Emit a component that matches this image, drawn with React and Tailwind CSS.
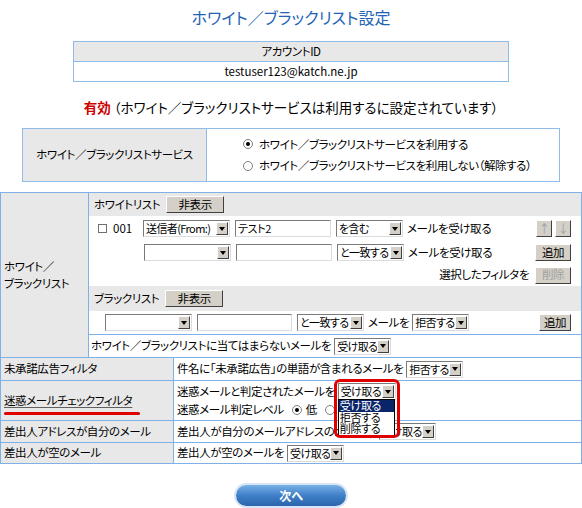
import React from 'react'

// Windows-classic style controls
function Sel({ value = '', className = '' }) {
  return (
    <span className={`relative inline-flex items-center h-[17px] bg-white border border-t-[#7a7a7a] border-l-[#7a7a7a] border-b-[#dcdcdc] border-r-[#dcdcdc] ${className}`}>
      <span className="pl-[2px] pr-[1px] text-[11px] tracking-[-0.6px] leading-[15px] whitespace-nowrap overflow-hidden">{value}</span>
      <span className="ml-auto mr-[1px] w-[12px] h-[13px] shrink-0 bg-[#d4d0c8] border border-t-white border-l-white border-b-[#404040] border-r-[#404040] flex items-center justify-center">
        <span className="w-0 h-0 border-l-[3px] border-r-[3px] border-t-[4px] border-l-transparent border-r-transparent border-t-black" />
      </span>
    </span>
  )
}

function Inp({ value = '', className = '' }) {
  return (
    <span className={`inline-flex items-center h-[17px] bg-white border border-t-[#7a7a7a] border-l-[#7a7a7a] border-b-[#dcdcdc] border-r-[#dcdcdc] px-[2px] text-[11px] tracking-[-0.4px] leading-[15px] ${className}`}>{value}</span>
  )
}

function Btn({ children, disabled, className = '' }) {
  return (
    <span className={`inline-flex items-center justify-center h-[17px] bg-[#d4d0c8] border border-t-white border-l-white border-b-[#404040] border-r-[#404040] text-[11.5px] leading-none ${disabled ? 'text-[#a0a0a0]' : 'text-black'} ${className}`}>{children}</span>
  )
}

function Radio({ on }) {
  return (
    <span className="inline-flex items-center justify-center w-[10px] h-[10px] rounded-full bg-white border border-[#808080] shrink-0">
      {on && <span className="w-[4px] h-[4px] rounded-full bg-black" />}
    </span>
  )
}

function App() {
  const bd = 'border border-[#7fb1e6]'
  return (
    <div className="w-[582px] h-[508px] bg-white text-black text-[11.5px] tracking-[-0.4px] font-['Noto_Sans_CJK_JP','Noto_Sans_CJK_SC',sans-serif] [font-feature-settings:'palt'] overflow-hidden">
      <div className="h-[34px] flex items-center justify-center text-[16px] tracking-normal text-[#2363b5]">ホワイト／ブラックリスト設定</div>

      <div className="mt-[7px] mx-auto w-[436px] border border-[#8fbbe8]">
        <div className="h-[20px] bg-[#e8e8e8] flex items-center justify-center border-b border-[#8fbbe8]">アカウントID</div>
        <div className="h-[19px] flex items-center justify-center tracking-normal">testuser123@katch.ne.jp</div>
      </div>

      <div className="mt-[16px] h-[18px] flex items-center justify-center text-[13.5px] tracking-normal">
        <span className="text-[#cc0000] font-bold">有効</span>
        <span className="ml-[3px]">（ホワイト／ブラックリストサービスは利用するに設定されています）</span>
      </div>

      <div className="mt-[12px] mx-auto w-[538px] h-[54px] flex border border-[#8fbbe8]">
        <div className="w-[184px] bg-[#e8e8e8] border-r border-[#8fbbe8] flex items-center justify-center">ホワイト／ブラックリストサービス</div>
        <div className="flex-1 flex flex-col justify-center gap-[4px] pl-[36px]">
          <div className="flex items-center gap-[6px]"><Radio on />ホワイト／ブラックリストサービスを利用する</div>
          <div className="flex items-center gap-[6px]"><Radio />ホワイト／ブラックリストサービスを利用しない（解除する）</div>
        </div>
      </div>

      <table className="mt-[10px] w-[582px] border-collapse">
        <colgroup>
          <col className="w-[88px]" />
          <col className="w-[85px]" />
          <col />
        </colgroup>
        <tbody>
          <tr>
            <td className={`${bd} bg-[#e8e8e8] align-middle pl-[3px]`}>ホワイト／<br />ブラックリスト</td>
            <td colSpan={2} className={`${bd} p-0`}>
              <div className="h-[23px] bg-[#e8e8e8] flex items-center pl-[5px] gap-[6px]">
                ホワイトリスト<Btn className="w-[58px]">非表示</Btn>
              </div>
              <div className="h-[25px] flex items-center pl-[9px] pr-[10px]">
                <span className="w-[9px] h-[9px] border border-[#707070] bg-white" />
                <span className="ml-[6px] w-[30px] tracking-normal">001</span>
                <Sel value="送信者(From:)" className="w-[87px]" />
                <Inp value="テスト2" className="ml-[5px] w-[96px]" />
                <Sel value="を含む" className="ml-[5px] w-[67px]" />
                <span className="ml-[4px]">メールを受け取る</span>
                <Btn disabled className="ml-auto w-[16px]">↑</Btn>
                <Btn disabled className="ml-[3px] w-[16px]">↓</Btn>
              </div>
              <div className="h-[23px] flex items-center pl-[55px] pr-[10px]">
                <Sel className="w-[87px]" />
                <Inp className="ml-[5px] w-[96px]" />
                <Sel value="と一致する" className="ml-[5px] w-[67px]" />
                <span className="ml-[4px]">メールを受け取る</span>
                <Btn className="ml-auto w-[36px]">追加</Btn>
              </div>
              <div className="h-[22px] flex items-center justify-end pr-[10px] gap-[6px]">
                選択したフィルタを<Btn disabled className="w-[36px]">削除</Btn>
              </div>
              <div className="h-[25px] bg-[#e8e8e8] flex items-center pl-[5px] gap-[6px]">
                ブラックリスト<Btn className="w-[58px]">非表示</Btn>
              </div>
              <div className="h-[23px] flex items-center pl-[16px] pr-[10px]">
                <Sel className="w-[87px]" />
                <Inp className="ml-[5px] w-[95px]" />
                <Sel value="と一致する" className="ml-[5px] w-[67px]" />
                <span className="ml-[4px]">メールを</span>
                <Sel value="拒否する" className="ml-[3px] w-[57px]" />
                <Btn className="ml-auto w-[32px]">追加</Btn>
              </div>
              <div className="h-[23px] flex items-center pl-[2px] border-t border-[#7fb1e6]">
                ホワイト／ブラックリストに当てはまらないメールを
                <Sel value="受け取る" className="ml-[3px] w-[57px]" />
              </div>
            </td>
          </tr>
          <tr className="h-[23px]">
            <td colSpan={2} className={`${bd} bg-[#e8e8e8] pl-[3px]`}>未承諾広告フィルタ</td>
            <td className={`${bd} pl-[3px]`}>
              <div className="flex items-center">件名に「未承諾広告」の単語が含まれるメールを<Sel value="拒否する" className="ml-[3px] w-[57px]" /></div>
            </td>
          </tr>
          <tr className="h-[40px]">
            <td colSpan={2} className={`${bd} bg-[#e8e8e8] pl-[3px]`}>
              <div className="relative">
                <span className="underline decoration-[#606060] underline-offset-2">迷惑メールチェックフィルタ</span>
                <span className="absolute left-0 top-[20px] w-[136px] h-[3px] rounded-full bg-[#e00000]" />
              </div>
            </td>
            <td className={`${bd} pl-[3px]`}>
              <div className="flex items-center h-[18px]">
                迷惑メールと判定されたメールを
                <span className="relative ml-[3px]">
                  <Sel value="受け取る" className="w-[58px]" />
                  <div className="absolute left-0 top-[16px] w-[57px] bg-white border border-black z-10 text-[11px] tracking-[-0.3px] leading-[11.5px]">
                    <div className="bg-[#0a246a] text-white px-[1px]">受け取る</div>
                    <div className="px-[1px]">拒否する</div>
                    <div className="px-[1px] pb-[1px]">削除する</div>
                  </div>
                  <span className="absolute left-[-4px] top-[-4px] w-[66px] h-[59px] border-[3px] border-[#e00000] rounded-[6px] z-20" />
                </span>
              </div>
              <div className="flex items-center h-[17px] gap-[4px]">
                迷惑メール判定レベル<span className="ml-[4px] flex items-center gap-[4px]"><Radio on />低</span>
                <span className="ml-[4px] flex items-center gap-[4px]"><Radio />中</span>
                <span className="ml-[4px] flex items-center gap-[4px]"><Radio />高</span>
              </div>
            </td>
          </tr>
          <tr className="h-[22px]">
            <td colSpan={2} className={`${bd} bg-[#e8e8e8] pl-[3px]`}>差出人アドレスが自分のメール</td>
            <td className={`${bd} pl-[3px]`}>
              <div className="flex items-center">差出人が自分のメールアドレスのメールを<Sel value="受け取る" className="ml-[3px] w-[57px]" /></div>
            </td>
          </tr>
          <tr className="h-[21px]">
            <td colSpan={2} className={`${bd} bg-[#e8e8e8] pl-[3px]`}>差出人が空のメール</td>
            <td className={`${bd} pl-[3px]`}>
              <div className="flex items-center">差出人が空のメールを<Sel value="受け取る" className="ml-[3px] w-[57px]" /></div>
            </td>
          </tr>
        </tbody>
      </table>

      <div className="mt-[19px] flex justify-center">
        <div className="w-[114px] h-[25px] rounded-full p-[2px] bg-[#d6e6f6]">
          <div className="w-full h-full rounded-full bg-gradient-to-b from-[#78b0e6] via-[#3f80c8] to-[#2a64ac] flex items-center justify-center text-white font-bold text-[12px] tracking-normal">次へ</div>
        </div>
      </div>
    </div>
  )
}

export default App
